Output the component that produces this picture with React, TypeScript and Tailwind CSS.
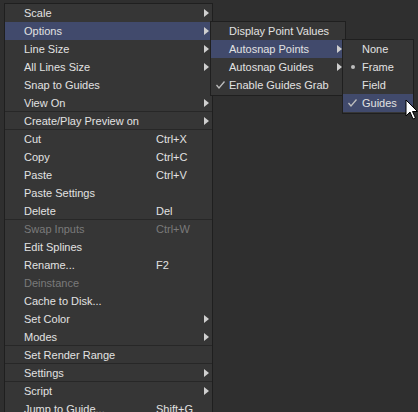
import React from "react";

type Item = { label?: string; sc?: string; arrow?: boolean; dis?: boolean; hl?: boolean; sep?: boolean };

const main: Item[] = [
  { label: "Scale", arrow: true },
  { label: "Options", arrow: true, hl: true },
  { label: "Line Size", arrow: true },
  { label: "All Lines Size", arrow: true },
  { label: "Snap to Guides" },
  { label: "View On", arrow: true, sep: true },
  { label: "Create/Play Preview on", arrow: true, sep: true },
  { label: "Cut", sc: "Ctrl+X" },
  { label: "Copy", sc: "Ctrl+C" },
  { label: "Paste", sc: "Ctrl+V" },
  { label: "Paste Settings" },
  { label: "Delete", sc: "Del", sep: true },
  { label: "Swap Inputs", sc: "Ctrl+W", dis: true },
  { label: "Edit Splines" },
  { label: "Rename...", sc: "F2" },
  { label: "Deinstance", dis: true },
  { label: "Cache to Disk..." },
  { label: "Set Color", arrow: true },
  { label: "Modes", arrow: true, sep: true },
  { label: "Set Render Range", sep: true },
  { label: "Settings", arrow: true, sep: true },
  { label: "Script", arrow: true },
  { label: "Jump to Guide...", sc: "Shift+G" },
];

const Arrow = () => (
  <svg width="5" height="8" viewBox="0 0 5 8" className="absolute right-[3px] top-[5px]">
    <path d="M0 0 L5 4 L0 8 Z" fill="#cfcfcf" />
  </svg>
);

const Check = () => (
  <svg width="9" height="8" viewBox="0 0 9 8" className="absolute left-[5px] top-[5px]">
    <path d="M0.5 4 L3 7 L8.5 0.5" stroke="#bdbdbd" strokeWidth="1.3" fill="none" />
  </svg>
);

function Row({ it, pl, w }: { it: Item; pl: number; w?: number }) {
  return (
    <div
      className={`relative h-[18px] leading-[18px] whitespace-nowrap ${it.hl ? "bg-[#414a6c]" : ""} ${it.sep ? "border-b border-[#272727]" : ""} ${it.dis ? "text-[#7a7a7a]" : "text-[#e2e2e2]"}`}
      style={{ paddingLeft: pl, boxSizing: "border-box" }}
    >
      {it.label}
      {it.sc && <span className="absolute left-[151px] top-0">{it.sc}</span>}
      {it.arrow && <Arrow />}
    </div>
  );
}

export default function App() {
  return (
    <div
      className="relative w-[418px] h-[412px] overflow-hidden bg-[#2f2f2f] text-[11px]"
      style={{ fontFamily: '"Liberation Sans", Arial, sans-serif' }}
    >
      <div className="absolute left-[4px] top-[3px] w-[209px] bg-[#363636] border border-[#1f1f1f]">
        {main.map((it, i) => (
          <Row key={i} it={it} pl={19} />
        ))}
      </div>
      <div className="absolute left-[210px] top-[21px] w-[136px] bg-[#363636] border border-[#1f1f1f] pb-[1px]">
        <Row it={{ label: "Display Point Values" }} pl={18} />
        <Row it={{ label: "Autosnap Points", arrow: true, hl: true }} pl={18} />
        <Row it={{ label: "Autosnap Guides", arrow: true }} pl={18} />
        <div className="relative">
          <Check />
          <Row it={{ label: "Enable Guides Grab" }} pl={18} />
        </div>
      </div>
      <div className="absolute left-[342px] top-[39px] w-[72px] bg-[#363636] border border-[#1f1f1f] pb-[1px]">
        <Row it={{ label: "None" }} pl={19} />
        <div className="relative">
          <div className="absolute left-[8px] top-[7px] w-[4px] h-[4px] rounded-full bg-[#bdbdbd]" />
          <Row it={{ label: "Frame" }} pl={19} />
        </div>
        <Row it={{ label: "Field" }} pl={19} />
        <div className="relative bg-[#414a6c]">
          <Check />
          <Row it={{ label: "Guides" }} pl={19} />
        </div>
      </div>
      <svg width="14" height="22" viewBox="0 0 14 22" className="absolute left-[405px] top-[99px]">
        <path d="M1 1 L1 17 L5 13 L8 20 L10.5 19 L7.5 12.5 L12.5 12.5 Z" fill="#fff" stroke="#000" strokeWidth="1" />
      </svg>
    </div>
  );
}
